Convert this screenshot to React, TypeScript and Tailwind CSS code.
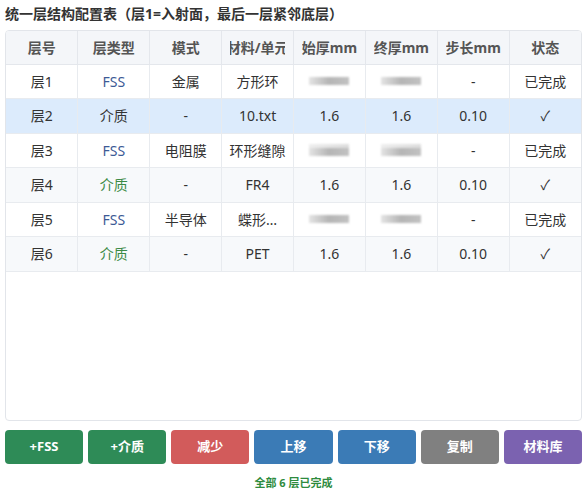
import React from 'react';

type Row = {
  id: string;
  kind: 'FSS' | '介质';
  mode: string;
  material: string;
  start: string | null;
  end: string | null;
  step: string;
  status: string;
};

const rows: Row[] = [
  { id: '层1', kind: 'FSS', mode: '金属', material: '方形环', start: null, end: null, step: '-', status: '已完成' },
  { id: '层2', kind: '介质', mode: '-', material: '10.txt', start: '1.6', end: '1.6', step: '0.10', status: '✓' },
  { id: '层3', kind: 'FSS', mode: '电阻膜', material: '环形缝隙', start: null, end: null, step: '-', status: '已完成' },
  { id: '层4', kind: '介质', mode: '-', material: 'FR4', start: '1.6', end: '1.6', step: '0.10', status: '✓' },
  { id: '层5', kind: 'FSS', mode: '半导体', material: '蝶形…', start: null, end: null, step: '-', status: '已完成' },
  { id: '层6', kind: '介质', mode: '-', material: 'PET', start: '1.6', end: '1.6', step: '0.10', status: '✓' },
];

const headers = ['层号', '层类型', '模式', '材料/单元', '始厚mm', '终厚mm', '步长mm', '状态'];

const buttons = [
  { label: '+FSS', cls: 'bg-[#2e8b57]' },
  { label: '+介质', cls: 'bg-[#2e8b57]' },
  { label: '减少', cls: 'bg-[#d25b5b]' },
  { label: '上移', cls: 'bg-[#3b7bb6]' },
  { label: '下移', cls: 'bg-[#3b7bb6]' },
  { label: '复制', cls: 'bg-[#808080]' },
  { label: '材料库', cls: 'bg-[#7b62b0]' },
];

// pixelated placeholder for values that are hidden
const Masked = ({ twoTone }: { twoTone?: boolean }) => (
  <div className="mx-auto flex w-[40px] flex-col blur-[0.8px]">
    {twoTone && <div className="h-[4px] w-full bg-gradient-to-r from-[#eeeeee] to-[#dddddd]" />}
    <div className="h-[8px] w-full bg-gradient-to-r from-[#e4e4e4] via-[#b5b5b5] to-[#c2c2c2]" />
  </div>
);

export default function App() {
  return (
    <div className="h-[497px] w-[587px] bg-white px-[5px] font-['Noto_Sans','Noto_Sans_CJK_SC',sans-serif] text-[#333]">
      <div className="h-[30px] pt-[4px] text-[14px] font-bold leading-[20px] text-[#333]">
        统一层结构配置表（层1=入射面，最后一层紧邻底层）
      </div>

      <div className="h-[391px] overflow-hidden rounded-[4px] border border-[#e2e5ea]">
        <table className="w-full table-fixed border-collapse text-[14px]">
          <thead>
            <tr className="h-[33px] bg-[#f4f6f9]">
              {headers.map((h, i) => (
                <th
                  key={h}
                  className={`border-b border-[#e4e7ec] px-0 font-bold text-[#555] ${i > 0 ? 'border-l' : ''}`}
                >
                  <div className="mx-[8px] flex justify-center overflow-hidden whitespace-nowrap">
                    <span>{h}</span>
                  </div>
                </th>
              ))}
            </tr>
          </thead>
          <tbody>
            {rows.map((r, idx) => {
              const selected = idx === 1;
              const striped = idx % 2 === 1;
              const bg = selected ? 'bg-[#dcebfc]' : striped ? 'bg-[#f7f9fb]' : 'bg-white';
              const kindColor = selected
                ? 'text-[#333]'
                : r.kind === 'FSS'
                  ? 'text-[#3d5a96]'
                  : 'text-[#3b8a45]';
              const cell = 'border-l border-b border-[#e8ebef] text-center whitespace-nowrap overflow-hidden';
              return (
                <tr key={r.id} className={`h-[34.5px] ${bg}`}>
                  <td className="border-b border-[#e8ebef] text-center">{r.id}</td>
                  <td className={`${cell} ${kindColor}`}>{r.kind}</td>
                  <td className={cell}>{r.mode}</td>
                  <td className={cell}>{r.material}</td>
                  <td className={cell}>{r.start ?? <Masked twoTone={idx === 2} />}</td>
                  <td className={cell}>{r.end ?? <Masked twoTone={idx === 2} />}</td>
                  <td className={cell}>{r.step}</td>
                  <td className={cell}>{r.status}</td>
                </tr>
              );
            })}
          </tbody>
        </table>
      </div>

      <div className="mt-[9px] grid grid-cols-7 gap-[5px]">
        {buttons.map((b) => (
          <button
            key={b.label}
            className={`h-[34px] rounded-[4px] text-[13px] font-bold text-white ${b.cls}`}
          >
            {b.label}
          </button>
        ))}
      </div>

      <div className="mt-[12px] text-center text-[11px] font-bold leading-[14px] text-[#2e8b3e]">
        全部 6 层已完成
      </div>
    </div>
  );
}
